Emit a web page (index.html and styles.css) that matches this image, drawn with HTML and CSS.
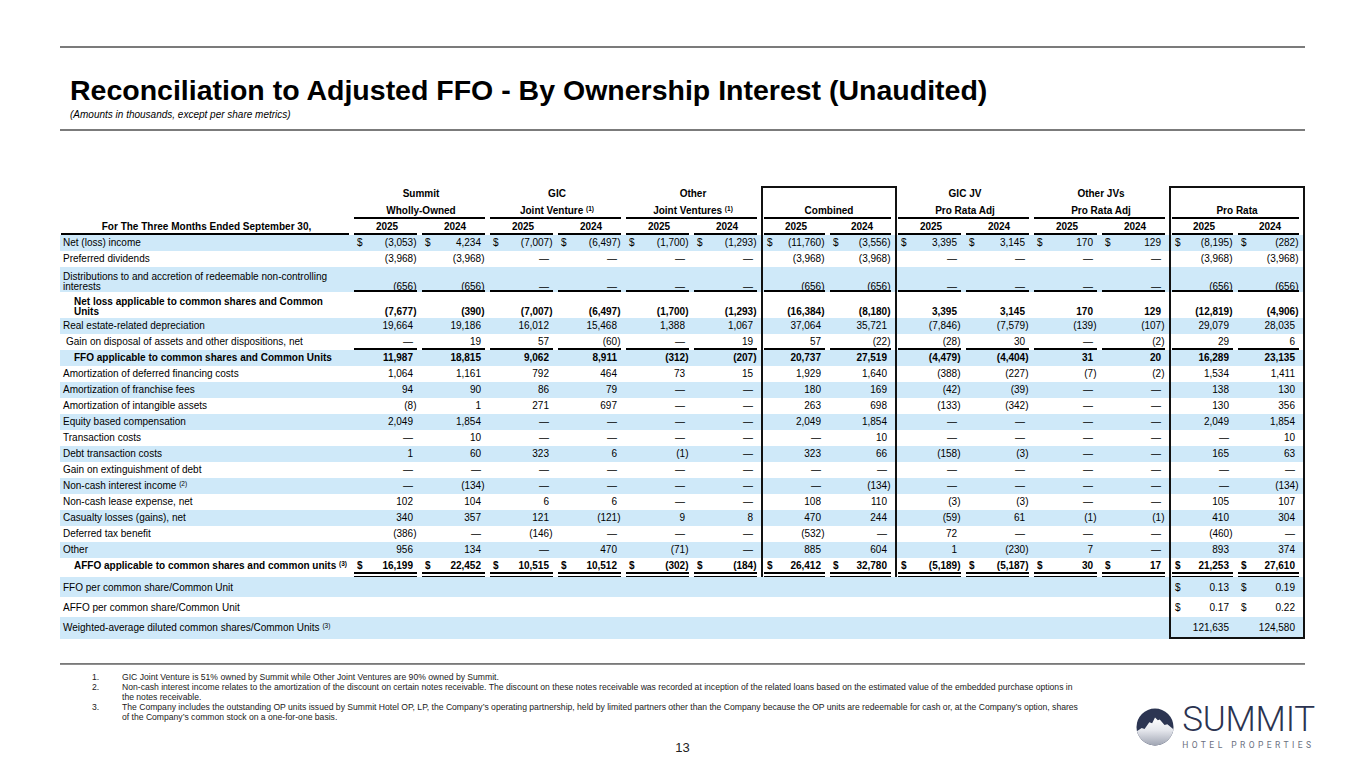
FILE: index.html
```html
<!DOCTYPE html>
<html lang="en">
<head>
<meta charset="utf-8">
<title>Reconciliation to Adjusted FFO - By Ownership Interest (Unaudited)</title>
<link rel="stylesheet" href="styles.css">
</head>
<body>
<div class="page">
  <div class="rule rule-top"></div>
  <h1 class="title">Reconciliation to Adjusted FFO - By Ownership Interest (Unaudited)</h1>
  <p class="subtitle">(Amounts in thousands, except per share metrics)</p>
  <div class="rule rule-mid"></div>

  <div class="table">
    <div class="row hrow hb h1">
      <div></div>
      <div class="g hd">Summit</div>
      <div class="g hd">GIC</div>
      <div class="g hd">Other</div>
      <div class="g hd"></div>
      <div class="g hd">GIC JV</div>
      <div class="g hd">Other JVs</div>
      <div class="g hd"></div>
    </div>
    <div class="row hrow hb h2">
      <div></div>
      <div class="g hd ul">Wholly-Owned</div>
      <div class="g hd ul">Joint Venture <sup>(1)</sup></div>
      <div class="g hd ul">Joint Ventures <sup>(1)</sup></div>
      <div class="g hd ul">Combined</div>
      <div class="g hd ul">Pro Rata Adj</div>
      <div class="g hd ul">Pro Rata Adj</div>
      <div class="g hd ul">Pro Rata</div>
    </div>
    <div class="row bx h3">
      <div class="hd ul">For The Three Months Ended September 30,</div>
      <div class="hd ul">2025</div><div class="hd ul">2024</div>
      <div class="hd ul">2025</div><div class="hd ul">2024</div>
      <div class="hd ul">2025</div><div class="hd ul">2024</div>
      <div class="hd ul">2025</div><div class="hd ul">2024</div>
      <div class="hd ul">2025</div><div class="hd ul">2024</div>
      <div class="hd ul">2025</div><div class="hd ul">2024</div>
      <div class="hd ul">2025</div><div class="hd ul">2024</div>
    </div>

    <div class="row bx blue">
      <div class="lbl">Net (loss) income</div>
      <div class="v"><span class="d">$</span><span class="ng">(3,053)</span></div>
      <div class="v"><span class="d">$</span><span>4,234</span></div>
      <div class="v"><span class="d">$</span><span class="ng">(7,007)</span></div>
      <div class="v"><span class="d">$</span><span class="ng">(6,497)</span></div>
      <div class="v"><span class="d">$</span><span class="ng">(1,700)</span></div>
      <div class="v"><span class="d">$</span><span class="ng">(1,293)</span></div>
      <div class="v"><span class="d">$</span><span class="ng">(11,760)</span></div>
      <div class="v"><span class="d">$</span><span class="ng">(3,556)</span></div>
      <div class="v"><span class="d">$</span><span>3,395</span></div>
      <div class="v"><span class="d">$</span><span>3,145</span></div>
      <div class="v"><span class="d">$</span><span>170</span></div>
      <div class="v"><span class="d">$</span><span>129</span></div>
      <div class="v"><span class="d">$</span><span class="ng">(8,195)</span></div>
      <div class="v"><span class="d">$</span><span class="ng">(282)</span></div>
    </div>
    <div class="row bx">
      <div class="lbl">Preferred dividends</div>
      <div class="v"><span class="ng">(3,968)</span></div>
      <div class="v"><span class="ng">(3,968)</span></div>
      <div class="v"><span>—</span></div>
      <div class="v"><span>—</span></div>
      <div class="v"><span>—</span></div>
      <div class="v"><span>—</span></div>
      <div class="v"><span class="ng">(3,968)</span></div>
      <div class="v"><span class="ng">(3,968)</span></div>
      <div class="v"><span>—</span></div>
      <div class="v"><span>—</span></div>
      <div class="v"><span>—</span></div>
      <div class="v"><span>—</span></div>
      <div class="v"><span class="ng">(3,968)</span></div>
      <div class="v"><span class="ng">(3,968)</span></div>
    </div>
    <div class="row bx blue two">
      <div class="lbl">Distributions to and accretion of redeemable non-controlling<br>interests</div>
      <div class="v ul"><span class="ng">(656)</span></div>
      <div class="v ul"><span class="ng">(656)</span></div>
      <div class="v ul"><span>—</span></div>
      <div class="v ul"><span>—</span></div>
      <div class="v ul"><span>—</span></div>
      <div class="v ul"><span>—</span></div>
      <div class="v ul"><span class="ng">(656)</span></div>
      <div class="v ul"><span class="ng">(656)</span></div>
      <div class="v ul"><span>—</span></div>
      <div class="v ul"><span>—</span></div>
      <div class="v ul"><span>—</span></div>
      <div class="v ul"><span>—</span></div>
      <div class="v ul"><span class="ng">(656)</span></div>
      <div class="v ul"><span class="ng">(656)</span></div>
    </div>
    <div class="row bx two bold pb2">
      <div class="lbl ind">Net loss applicable to common shares and Common<br>Units</div>
      <div class="v"><span class="ng">(7,677)</span></div>
      <div class="v"><span class="ng">(390)</span></div>
      <div class="v"><span class="ng">(7,007)</span></div>
      <div class="v"><span class="ng">(6,497)</span></div>
      <div class="v"><span class="ng">(1,700)</span></div>
      <div class="v"><span class="ng">(1,293)</span></div>
      <div class="v"><span class="ng">(16,384)</span></div>
      <div class="v"><span class="ng">(8,180)</span></div>
      <div class="v"><span>3,395</span></div>
      <div class="v"><span>3,145</span></div>
      <div class="v"><span>170</span></div>
      <div class="v"><span>129</span></div>
      <div class="v"><span class="ng">(12,819)</span></div>
      <div class="v"><span class="ng">(4,906)</span></div>
    </div>
    <div class="row bx blue">
      <div class="lbl">Real estate-related depreciation</div>
      <div class="v"><span>19,664</span></div>
      <div class="v"><span>19,186</span></div>
      <div class="v"><span>16,012</span></div>
      <div class="v"><span>15,468</span></div>
      <div class="v"><span>1,388</span></div>
      <div class="v"><span>1,067</span></div>
      <div class="v"><span>37,064</span></div>
      <div class="v"><span>35,721</span></div>
      <div class="v"><span class="ng">(7,846)</span></div>
      <div class="v"><span class="ng">(7,579)</span></div>
      <div class="v"><span class="ng">(139)</span></div>
      <div class="v"><span class="ng">(107)</span></div>
      <div class="v"><span>29,079</span></div>
      <div class="v"><span>28,035</span></div>
    </div>
    <div class="row bx">
      <div class="lbl sub">Gain on disposal of assets and other dispositions, net</div>
      <div class="v ul"><span>—</span></div>
      <div class="v ul"><span>19</span></div>
      <div class="v ul"><span>57</span></div>
      <div class="v ul"><span class="ng">(60)</span></div>
      <div class="v ul"><span>—</span></div>
      <div class="v ul"><span>19</span></div>
      <div class="v ul"><span>57</span></div>
      <div class="v ul"><span class="ng">(22)</span></div>
      <div class="v ul"><span class="ng">(28)</span></div>
      <div class="v ul"><span>30</span></div>
      <div class="v ul"><span>—</span></div>
      <div class="v ul"><span class="ng">(2)</span></div>
      <div class="v ul"><span>29</span></div>
      <div class="v ul"><span>6</span></div>
    </div>
    <div class="row bx blue bold">
      <div class="lbl ind">FFO applicable to common shares and Common Units</div>
      <div class="v"><span>11,987</span></div>
      <div class="v"><span>18,815</span></div>
      <div class="v"><span>9,062</span></div>
      <div class="v"><span>8,911</span></div>
      <div class="v"><span class="ng">(312)</span></div>
      <div class="v"><span class="ng">(207)</span></div>
      <div class="v"><span>20,737</span></div>
      <div class="v"><span>27,519</span></div>
      <div class="v"><span class="ng">(4,479)</span></div>
      <div class="v"><span class="ng">(4,404)</span></div>
      <div class="v"><span>31</span></div>
      <div class="v"><span>20</span></div>
      <div class="v"><span>16,289</span></div>
      <div class="v"><span>23,135</span></div>
    </div>
    <div class="row bx">
      <div class="lbl">Amortization of deferred financing costs</div>
      <div class="v"><span>1,064</span></div>
      <div class="v"><span>1,161</span></div>
      <div class="v"><span>792</span></div>
      <div class="v"><span>464</span></div>
      <div class="v"><span>73</span></div>
      <div class="v"><span>15</span></div>
      <div class="v"><span>1,929</span></div>
      <div class="v"><span>1,640</span></div>
      <div class="v"><span class="ng">(388)</span></div>
      <div class="v"><span class="ng">(227)</span></div>
      <div class="v"><span class="ng">(7)</span></div>
      <div class="v"><span class="ng">(2)</span></div>
      <div class="v"><span>1,534</span></div>
      <div class="v"><span>1,411</span></div>
    </div>
    <div class="row bx blue">
      <div class="lbl">Amortization of franchise fees</div>
      <div class="v"><span>94</span></div>
      <div class="v"><span>90</span></div>
      <div class="v"><span>86</span></div>
      <div class="v"><span>79</span></div>
      <div class="v"><span>—</span></div>
      <div class="v"><span>—</span></div>
      <div class="v"><span>180</span></div>
      <div class="v"><span>169</span></div>
      <div class="v"><span class="ng">(42)</span></div>
      <div class="v"><span class="ng">(39)</span></div>
      <div class="v"><span>—</span></div>
      <div class="v"><span>—</span></div>
      <div class="v"><span>138</span></div>
      <div class="v"><span>130</span></div>
    </div>
    <div class="row bx">
      <div class="lbl">Amortization of intangible assets</div>
      <div class="v"><span class="ng">(8)</span></div>
      <div class="v"><span>1</span></div>
      <div class="v"><span>271</span></div>
      <div class="v"><span>697</span></div>
      <div class="v"><span>—</span></div>
      <div class="v"><span>—</span></div>
      <div class="v"><span>263</span></div>
      <div class="v"><span>698</span></div>
      <div class="v"><span class="ng">(133)</span></div>
      <div class="v"><span class="ng">(342)</span></div>
      <div class="v"><span>—</span></div>
      <div class="v"><span>—</span></div>
      <div class="v"><span>130</span></div>
      <div class="v"><span>356</span></div>
    </div>
    <div class="row bx blue">
      <div class="lbl">Equity based compensation</div>
      <div class="v"><span>2,049</span></div>
      <div class="v"><span>1,854</span></div>
      <div class="v"><span>—</span></div>
      <div class="v"><span>—</span></div>
      <div class="v"><span>—</span></div>
      <div class="v"><span>—</span></div>
      <div class="v"><span>2,049</span></div>
      <div class="v"><span>1,854</span></div>
      <div class="v"><span>—</span></div>
      <div class="v"><span>—</span></div>
      <div class="v"><span>—</span></div>
      <div class="v"><span>—</span></div>
      <div class="v"><span>2,049</span></div>
      <div class="v"><span>1,854</span></div>
    </div>
    <div class="row bx">
      <div class="lbl">Transaction costs</div>
      <div class="v"><span>—</span></div>
      <div class="v"><span>10</span></div>
      <div class="v"><span>—</span></div>
      <div class="v"><span>—</span></div>
      <div class="v"><span>—</span></div>
      <div class="v"><span>—</span></div>
      <div class="v"><span>—</span></div>
      <div class="v"><span>10</span></div>
      <div class="v"><span>—</span></div>
      <div class="v"><span>—</span></div>
      <div class="v"><span>—</span></div>
      <div class="v"><span>—</span></div>
      <div class="v"><span>—</span></div>
      <div class="v"><span>10</span></div>
    </div>
    <div class="row bx blue">
      <div class="lbl">Debt transaction costs</div>
      <div class="v"><span>1</span></div>
      <div class="v"><span>60</span></div>
      <div class="v"><span>323</span></div>
      <div class="v"><span>6</span></div>
      <div class="v"><span class="ng">(1)</span></div>
      <div class="v"><span>—</span></div>
      <div class="v"><span>323</span></div>
      <div class="v"><span>66</span></div>
      <div class="v"><span class="ng">(158)</span></div>
      <div class="v"><span class="ng">(3)</span></div>
      <div class="v"><span>—</span></div>
      <div class="v"><span>—</span></div>
      <div class="v"><span>165</span></div>
      <div class="v"><span>63</span></div>
    </div>
    <div class="row bx">
      <div class="lbl">Gain on extinguishment of debt</div>
      <div class="v"><span>—</span></div>
      <div class="v"><span>—</span></div>
      <div class="v"><span>—</span></div>
      <div class="v"><span>—</span></div>
      <div class="v"><span>—</span></div>
      <div class="v"><span>—</span></div>
      <div class="v"><span>—</span></div>
      <div class="v"><span>—</span></div>
      <div class="v"><span>—</span></div>
      <div class="v"><span>—</span></div>
      <div class="v"><span>—</span></div>
      <div class="v"><span>—</span></div>
      <div class="v"><span>—</span></div>
      <div class="v"><span>—</span></div>
    </div>
    <div class="row bx blue">
      <div class="lbl">Non-cash interest income <sup>(2)</sup></div>
      <div class="v"><span>—</span></div>
      <div class="v"><span class="ng">(134)</span></div>
      <div class="v"><span>—</span></div>
      <div class="v"><span>—</span></div>
      <div class="v"><span>—</span></div>
      <div class="v"><span>—</span></div>
      <div class="v"><span>—</span></div>
      <div class="v"><span class="ng">(134)</span></div>
      <div class="v"><span>—</span></div>
      <div class="v"><span>—</span></div>
      <div class="v"><span>—</span></div>
      <div class="v"><span>—</span></div>
      <div class="v"><span>—</span></div>
      <div class="v"><span class="ng">(134)</span></div>
    </div>
    <div class="row bx">
      <div class="lbl">Non-cash lease expense, net</div>
      <div class="v"><span>102</span></div>
      <div class="v"><span>104</span></div>
      <div class="v"><span>6</span></div>
      <div class="v"><span>6</span></div>
      <div class="v"><span>—</span></div>
      <div class="v"><span>—</span></div>
      <div class="v"><span>108</span></div>
      <div class="v"><span>110</span></div>
      <div class="v"><span class="ng">(3)</span></div>
      <div class="v"><span class="ng">(3)</span></div>
      <div class="v"><span>—</span></div>
      <div class="v"><span>—</span></div>
      <div class="v"><span>105</span></div>
      <div class="v"><span>107</span></div>
    </div>
    <div class="row bx blue">
      <div class="lbl">Casualty losses (gains), net</div>
      <div class="v"><span>340</span></div>
      <div class="v"><span>357</span></div>
      <div class="v"><span>121</span></div>
      <div class="v"><span class="ng">(121)</span></div>
      <div class="v"><span>9</span></div>
      <div class="v"><span>8</span></div>
      <div class="v"><span>470</span></div>
      <div class="v"><span>244</span></div>
      <div class="v"><span class="ng">(59)</span></div>
      <div class="v"><span>61</span></div>
      <div class="v"><span class="ng">(1)</span></div>
      <div class="v"><span class="ng">(1)</span></div>
      <div class="v"><span>410</span></div>
      <div class="v"><span>304</span></div>
    </div>
    <div class="row bx">
      <div class="lbl">Deferred tax benefit</div>
      <div class="v"><span class="ng">(386)</span></div>
      <div class="v"><span>—</span></div>
      <div class="v"><span class="ng">(146)</span></div>
      <div class="v"><span>—</span></div>
      <div class="v"><span>—</span></div>
      <div class="v"><span>—</span></div>
      <div class="v"><span class="ng">(532)</span></div>
      <div class="v"><span>—</span></div>
      <div class="v"><span>72</span></div>
      <div class="v"><span>—</span></div>
      <div class="v"><span>—</span></div>
      <div class="v"><span>—</span></div>
      <div class="v"><span class="ng">(460)</span></div>
      <div class="v"><span>—</span></div>
    </div>
    <div class="row bx blue">
      <div class="lbl">Other</div>
      <div class="v"><span>956</span></div>
      <div class="v"><span>134</span></div>
      <div class="v"><span>—</span></div>
      <div class="v"><span>470</span></div>
      <div class="v"><span class="ng">(71)</span></div>
      <div class="v"><span>—</span></div>
      <div class="v"><span>885</span></div>
      <div class="v"><span>604</span></div>
      <div class="v"><span>1</span></div>
      <div class="v"><span class="ng">(230)</span></div>
      <div class="v"><span>7</span></div>
      <div class="v"><span>—</span></div>
      <div class="v"><span>893</span></div>
      <div class="v"><span>374</span></div>
    </div>
    <div class="row bx bold total">
      <div class="lbl ind">AFFO applicable to common shares and common units <sup>(3)</sup></div>
      <div class="v dul"><span class="d">$</span><span>16,199</span></div>
      <div class="v dul"><span class="d">$</span><span>22,452</span></div>
      <div class="v dul"><span class="d">$</span><span>10,515</span></div>
      <div class="v dul"><span class="d">$</span><span>10,512</span></div>
      <div class="v dul"><span class="d">$</span><span class="ng">(302)</span></div>
      <div class="v dul"><span class="d">$</span><span class="ng">(184)</span></div>
      <div class="v dul"><span class="d">$</span><span>26,412</span></div>
      <div class="v dul"><span class="d">$</span><span>32,780</span></div>
      <div class="v dul"><span class="d">$</span><span class="ng">(5,189)</span></div>
      <div class="v dul"><span class="d">$</span><span class="ng">(5,187)</span></div>
      <div class="v dul"><span class="d">$</span><span>30</span></div>
      <div class="v dul"><span class="d">$</span><span>17</span></div>
      <div class="v dul"><span class="d">$</span><span>21,253</span></div>
      <div class="v dul"><span class="d">$</span><span>27,610</span></div>
    </div>
    <div class="row bxp ps blue">
      <div class="lbl">FFO per common share/Common Unit</div>
      <div></div><div></div><div></div><div></div><div></div><div></div>
      <div></div><div></div><div></div><div></div><div></div><div></div>
      <div class="v"><span class="d">$</span><span>0.13</span></div>
      <div class="v"><span class="d">$</span><span>0.19</span></div>
    </div>
    <div class="row bxp ps">
      <div class="lbl">AFFO per common share/Common Unit</div>
      <div></div><div></div><div></div><div></div><div></div><div></div>
      <div></div><div></div><div></div><div></div><div></div><div></div>
      <div class="v"><span class="d">$</span><span>0.17</span></div>
      <div class="v"><span class="d">$</span><span>0.22</span></div>
    </div>
    <div class="row bxp ps blue last">
      <div class="lbl">Weighted-average diluted common shares/Common Units <sup>(3)</sup></div>
      <div></div><div></div><div></div><div></div><div></div><div></div>
      <div></div><div></div><div></div><div></div><div></div><div></div>
      <div class="v"><span>121,635</span></div>
      <div class="v"><span>124,580</span></div>
    </div>
  </div>

  <div class="rule rule-bottom"></div>

  <div class="foot">
    <ol class="notes">
      <li><span class="num">1.</span><span>GIC Joint Venture is 51% owned by Summit while Other Joint Ventures are 90% owned by Summit.</span></li>
      <li><span class="num">2.</span><span>Non-cash interest income relates to the amortization of the discount on certain notes receivable. The discount on these notes receivable was recorded at inception of the related loans based on the estimated value of the embedded purchase options in<br>the notes receivable.</span></li>
      <li><span class="num">3.</span><span>The Company includes the outstanding OP units issued by Summit Hotel OP, LP, the Company’s operating partnership, held by limited partners other than the Company because the OP units are redeemable for cash or, at the Company’s option, shares<br>of the Company’s common stock on a one-for-one basis.</span></li>
    </ol>
    <div class="pagenum">13</div>
    <div class="logo">
      <svg class="mark" width="38" height="38" viewBox="0 0 40 40" aria-hidden="true">
        <defs>
          <clipPath id="circ"><circle cx="20" cy="20" r="19.5"/></clipPath>
          <linearGradient id="snow" x1="0" y1="0" x2="0" y2="1">
            <stop offset="0" stop-color="#ffffff"/>
            <stop offset="0.45" stop-color="#e4e6ec"/>
            <stop offset="1" stop-color="#9ea3b1"/>
          </linearGradient>
        </defs>
        <g clip-path="url(#circ)">
          <rect width="40" height="40" fill="#2c3552"/>
          <path d="M0 25 L6 21 L9 22 L14 15 L17 16 L20 10 L23 13 L25 12 L30 18 L33 17 L40 23 L40 40 L0 40 Z" fill="url(#snow)"/>
        </g>
      </svg>
      <div class="wordmark">
        <div class="brand">SUMMIT</div>
        <div class="tag">HOTEL PROPERTIES</div>
      </div>
    </div>
  </div>
</div>
</body>
</html>
```
FILE: styles.css
```css
* {
  box-sizing: border-box;
  margin: 0;
  padding: 0;
}

body {
  width: 1365px;
  height: 768px;
  overflow: hidden;
  background: #ffffff;
  color: #000000;
  font-family: "Liberation Sans", Arial, sans-serif;
}

.page {
  padding: 0 60px;
}

.rule {
  height: 2px;
  background: #7b7b7b;
}

.rule-top {
  margin-top: 46px;
}

.title {
  margin: 26px 0 0 10px;
  font-size: 28.5px;
  line-height: 32px;
  font-weight: 700;
  letter-spacing: 0;
}

.subtitle {
  margin: 3px 0 0 10px;
  font-size: 10px;
  line-height: 12px;
  font-style: italic;
}

.rule-mid {
  margin-top: 8px;
}

/* ---------- table ---------- */
.table {
  margin-top: 55px;
  font-size: 10px;
}

.row {
  display: grid;
  grid-template-columns: 293px repeat(14, 68px);
  line-height: 16px;
}

.row.blue {
  background: #cfe9f9;
}

.hd {
  font-weight: 700;
  text-align: center;
  white-space: nowrap;
}

.g {
  grid-column: span 2;
}

.h2 > div {
  padding-top: 1px;
}

.ul {
  background-image: linear-gradient(#000, #000);
  background-repeat: no-repeat;
  background-position: 1px 100%;
  background-size: calc(100% - 5px) 2px;
}

.dul {
  background-image: linear-gradient(#000, #000), linear-gradient(#000, #000);
  background-repeat: no-repeat;
  background-position: 1px calc(100% - 3px), 1px 100%;
  background-size: calc(100% - 5px) 2px, calc(100% - 5px) 1px;
}

/* boxes around Combined and Pro Rata */
.hb > :nth-child(5),
.hb > :nth-child(8) {
  border-left: 2px solid #111;
  border-right: 2px solid #111;
}

.h1 > :nth-child(5),
.h1 > :nth-child(8) {
  border-top: 2px solid #111;
}

.bx > :nth-child(8),
.bx > :nth-child(14),
.bxp > :nth-child(14) {
  border-left: 2px solid #111;
}

.bx > :nth-child(9),
.bx > :nth-child(15),
.bxp > :nth-child(15) {
  border-right: 2px solid #111;
}

.last > :nth-child(14),
.last > :nth-child(15) {
  border-bottom: 2px solid #111;
}

.lbl {
  padding: 0 6px 0 3px;
  white-space: nowrap;
}

.lbl.sub {
  padding-left: 6px;
}

.lbl.ind {
  padding-left: 14px;
}

.bold {
  font-weight: 700;
}

.v {
  display: flex;
  justify-content: flex-end;
  align-items: flex-end;
  padding: 0 8px 0 4px;
  white-space: nowrap;
}

.v .d {
  margin-right: auto;
}

.ng {
  margin-right: -3.5px;
}

.two .lbl {
  line-height: 10px;
  padding-top: 5px;
}

.two .v {
  line-height: 10px;
}

.two.pb2 .lbl,
.two.pb2 .v {
  padding-bottom: 1px;
}

.total > div {
  padding-bottom: 3px;
}

.ps {
  line-height: 19px;
}

.ps > div {
  padding-top: 1px;
}

sup {
  font-size: 6.5px;
  line-height: 0;
  vertical-align: 3.5px;
  font-weight: inherit;
}

/* ---------- footer ---------- */
.rule-bottom {
  margin-top: 24px;
  background: linear-gradient(#6e6e6e, #9a9a9a);
}

.foot {
  display: grid;
  grid-template-columns: 1fr auto;
  grid-template-rows: auto auto;
}

.notes {
  grid-column: 1;
  grid-row: 1;
  list-style: none;
  padding: 7px 0 0 32px;
  font-size: 8.6px;
  line-height: 10px;
  color: #1a1a1a;
}

.notes li {
  display: grid;
  grid-template-columns: 30px auto;
}

.pagenum {
  grid-column: 1 / -1;
  grid-row: 2;
  text-align: center;
  font-size: 13px;
  line-height: 16px;
  margin-top: 18px;
  color: #222;
}

.logo {
  grid-column: 2;
  grid-row: 1 / 3;
  align-self: end;
  display: flex;
  align-items: flex-start;
  gap: 8px;
  margin: 0 -10px 6px 0;
}

.mark {
  display: block;
  margin-top: 9px;
}

.wordmark {
  display: flex;
  flex-direction: column;
}

.brand {
  font-family: Roboto, "Liberation Sans", sans-serif;
  font-weight: 300;
  font-size: 35px;
  line-height: 41px;
  color: #2b3350;
  letter-spacing: -0.2px;
}

.tag {
  font-family: Roboto, "Liberation Sans", sans-serif;
  font-size: 8.5px;
  line-height: 10px;
  letter-spacing: 3.45px;
  color: #6a6f7e;
  white-space: nowrap;
}
```
